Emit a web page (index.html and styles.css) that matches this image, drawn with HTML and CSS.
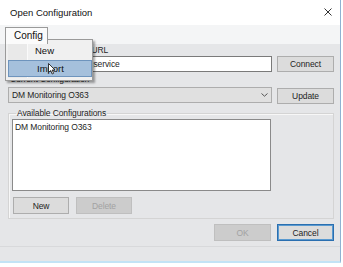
FILE: index.html
```html
<!DOCTYPE html>
<html>
<head>
<meta charset="utf-8">
<link rel="stylesheet" href="styles.css">
</head>
<body>
<div class="window">
  <div class="titlebar">
    <span class="title">Open Configuration</span>
    <svg class="close" width="8" height="8" viewBox="0 0 8 8"><path d="M0.5 0.5L7.5 7.5M7.5 0.5L0.5 7.5" stroke="#333" stroke-width="1" fill="none"/></svg>
  </div>
  <div class="menubar">
    <div class="menu-tab">Config</div>
  </div>
  <div class="content">
    <div class="label">Configuration Service URL</div>
    <div class="row">
      <div class="textbox">http://dmhost01/configservice</div>
      <div class="btn">Connect</div>
    </div>
    <div class="label label-2">Current Configuration</div>
    <div class="row">
      <div class="combo"><span>DM Monitoring O363</span>
        <svg class="chev" width="7" height="4" viewBox="0 0 7 4"><path d="M0.5 0.5L3.5 3.2L6.5 0.5" stroke="#555" stroke-width="1" fill="none"/></svg>
      </div>
      <div class="btn btn-update">Update</div>
    </div>
    <fieldset class="group">
      <legend>Available Configurations</legend>
      <div class="listbox"><div class="item">DM Monitoring O363</div></div>
      <div class="group-buttons">
        <div class="btn btn-small">New</div>
        <div class="btn btn-small disabled">Delete</div>
      </div>
    </fieldset>
    <div class="footer">
      <div class="btn btn-small disabled">OK</div>
      <div class="btn btn-small default">Cancel</div>
    </div>
    <div class="separator"></div>
  </div>
  <div class="dropdown">
    <div class="gutter"></div>
    <div class="menu-items">
      <div class="menu-item">New</div>
      <div class="menu-item active">Import</div>
    </div>
    <svg class="cursor" width="8" height="12" viewBox="0 0 8 12"><path d="M0.5 0.5L0.5 9.5L2.7 7.5L4.2 11L5.6 10.4L4.2 7L7 7Z" fill="#fff" stroke="#222" stroke-width="0.9" stroke-linejoin="round"/></svg>
  </div>
</div>
</body>
</html>
```

FILE: styles.css
```css
* { box-sizing: border-box; }
body {
  margin: 0;
  background: #ffffff;
  font-family: "Liberation Sans", Arial, sans-serif;
  font-size: 8.5px;
  letter-spacing: -0.1px;
  color: #1e1e1e;
}
.window {
  position: relative;
  width: 341px;
  height: 263px;
  background: #e5e6e8;
  border-right: 1px solid #8fb1d2;
  border-bottom: 2px solid #c3e3f5;
  display: flex;
  flex-direction: column;
}
.titlebar {
  height: 25px;
  background: #ffffff;
  display: flex;
  align-items: center;
  justify-content: space-between;
  padding: 0 8px 0 10px;
}
.title { font-size: 9.5px; letter-spacing: 0; color: #111; }
.close { display: block; margin-top: -1px; }
.menubar {
  height: 19px;
  background: #f4f5f6;
  padding: 2px 0 0 5px;
}
.menu-tab {
  width: 43px;
  height: 17px;
  border: 1px solid #9a9a9a;
  border-bottom: none;
  background: #fbfbfb;
  padding: 2px 0 0 8px;
  font-size: 10px;
  letter-spacing: 0;
  color: #111;
  position: relative;
  z-index: 3;
}
.content {
  flex: 1;
  display: flex;
  flex-direction: column;
  padding: 0 6px 0 8px;
}
.label {
  height: 12px;
  line-height: 13px;
  padding-left: 2px;
}
.label-2 {
  height: 15px;
  line-height: 15px;
}
.row {
  display: flex;
  gap: 5px;
  align-items: flex-start;
}
.textbox {
  flex: 1;
  height: 16px;
  background: #fff;
  border: 1px solid #7a7a7a;
  line-height: 14px;
  padding-left: 3px;
  white-space: nowrap;
  overflow: hidden;
}
.btn {
  width: 57px;
  height: 16px;
  border: 1px solid #adadad;
  background: #dcdcdc;
  display: flex;
  align-items: center;
  justify-content: center;
  color: #1e1e1e;
}
.btn-update { margin-top: 1px; }
.combo {
  flex: 1;
  height: 16px;
  background: #e0e0e0;
  border: 1px solid #adadad;
  display: flex;
  align-items: center;
  justify-content: space-between;
  padding: 0 3px 0 3px;
}
.chev { display: block; }
.group {
  margin: 4px 0 0 0;
  padding: 0 62px 4px 3px;
  border: 1px solid #d4d4d4;
  box-shadow: inset 1px 1px 0 #f7f7f7;
  min-width: 0;
}
.group legend {
  margin-left: 4px;
  padding: 0 1px;
  line-height: 11px;
}
.listbox {
  height: 72px;
  background: #fff;
  border: 1px solid #8a8a8a;
  padding: 2px 2px;
}
.item { line-height: 11px; }
.group-buttons {
  display: flex;
  gap: 7px;
  margin-top: 6px;
  padding-left: 1px;
}
.btn-small { width: 56px; height: 17px; }
.disabled {
  background: #cccccc;
  border-color: #bfbfbf;
  color: #a2a2a2;
}
.footer {
  display: flex;
  justify-content: flex-end;
  gap: 6px;
  margin-top: 5px;
}
.footer .btn-small { width: 57px; }
.default {
  border-color: #2a6fb0;
  box-shadow: inset 0 0 0 1px #5a9ad0;
}
.separator {
  margin: 5px -6px 0 -8px;
  height: 1px;
  background: #d8d9db;
}
.dropdown {
  position: absolute;
  left: 5px;
  top: 39px;
  width: 88px;
  height: 42px;
  background: #f0f0f0;
  border: 1px solid #9a9a9a;
  box-shadow: 2px 2px 2px rgba(0,0,0,0.35);
  display: flex;
  padding: 2px 0 2px 2px;
  z-index: 2;
}
.gutter {
  width: 20px;
  background: #e9e9e9;
  border-right: 1px solid #fafafa;
}
.menu-items {
  flex: 1;
  display: flex;
  flex-direction: column;
  margin-left: -20px;
}
.menu-item {
  height: 17px;
  line-height: 17px;
  padding-left: 27px;
  font-size: 9.5px;
  letter-spacing: 0;
  color: #111;
}
.menu-item.active {
  background: #a5c0dc;
  border: 1px solid #6e94bd;
  line-height: 15px;
  padding-left: 28px;
  margin-top: 1px;
}
.cursor {
  position: absolute;
  left: 42px;
  top: 23px;
}
```
